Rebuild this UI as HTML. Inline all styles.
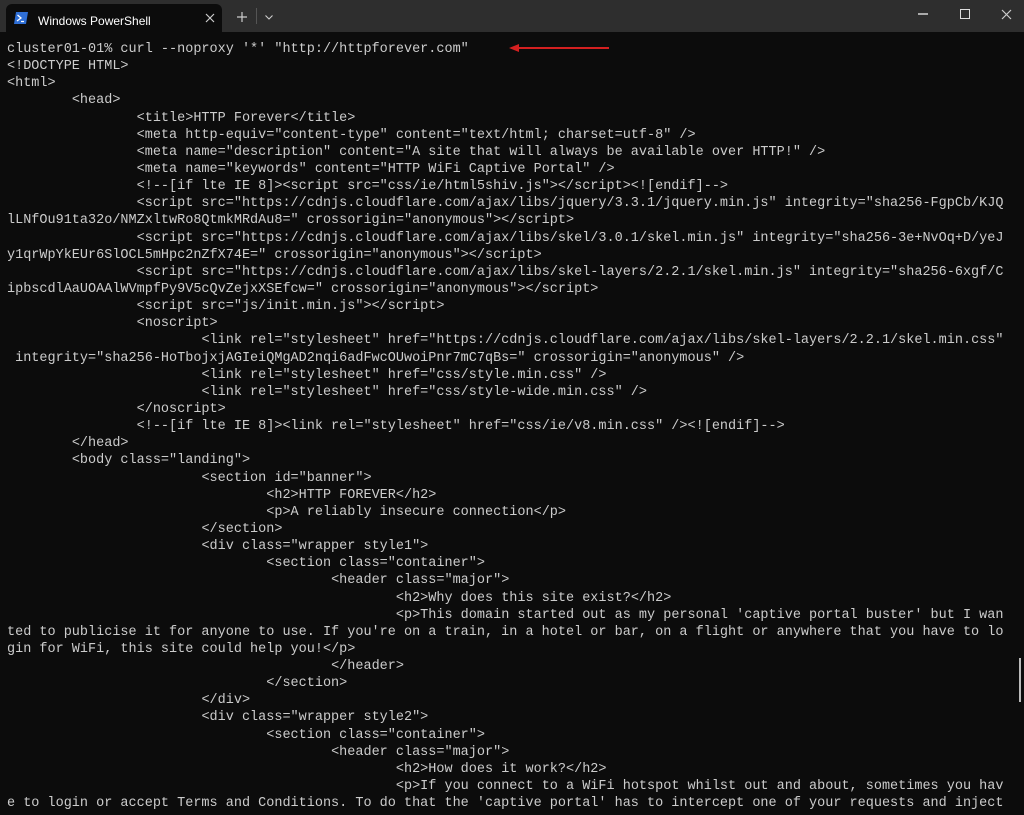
<!DOCTYPE html>
<html><head><style>
body{margin:0;width:1024px;height:815px;background:#0c0c0c;overflow:hidden;position:relative;font-family:"Liberation Sans",sans-serif}
.tb{position:absolute;left:0;top:0;width:1024px;height:32px;background:#2e2e2e}
.tab{position:absolute;left:6px;top:4px;width:216px;height:28px;background:#0c0c0c;border-radius:6px 6px 0 0}
.tt{position:absolute;left:32px;top:10px;color:#fff;font-size:12px}
pre{position:absolute;left:7px;top:41px;margin:0;font-family:"Liberation Mono",monospace;font-size:13.5px;line-height:17.14px;color:#cccccc;tab-size:8;-moz-tab-size:8;white-space:pre}
</style></head><body>
<div class="tb">
<div class="tab">
<svg style="position:absolute;left:8px;top:8px" width="14" height="12"><path d="M2 0H14L12 12H0Z" fill="#2f6fd6"/><path d="M3.5 3L7 6 3 9" stroke="#fff" stroke-width="1.3" fill="none"/><path d="M7 9.5H10" stroke="#fff" stroke-width="1.2"/></svg>
<div class="tt">Windows PowerShell</div>
<svg style="position:absolute;left:199px;top:9px" width="10" height="10"><path d="M1 1L9 9M9 1L1 9" stroke="#ccc" stroke-width="1.2"/></svg>
</div>
<svg style="position:absolute;left:237px;top:12px" width="10" height="10"><path d="M5 0V10M0 5H10" stroke="#ccc" stroke-width="1.2"/></svg>
<div style="position:absolute;left:256px;top:8px;width:1px;height:16px;background:#555"></div>
<svg style="position:absolute;left:265px;top:15px" width="8" height="5"><path d="M0.5 0.5L4 4 7.5 0.5" stroke="#ccc" stroke-width="1.1" fill="none"/></svg>
<div style="position:absolute;left:918px;top:13px;width:10px;height:1.5px;background:#aaa"></div>
<div style="position:absolute;left:960px;top:9px;width:8px;height:8px;border:1.3px solid #ddd"></div>
<svg style="position:absolute;left:1001px;top:9px" width="11" height="11"><path d="M1 1L10 10M10 1L1 10" stroke="#ccc" stroke-width="1.2"/></svg>
</div>
<svg style="position:absolute;left:505px;top:43px" width="106" height="10"><path d="M12 5H104" stroke="#d42020" stroke-width="2"/><path d="M4 5L14 1V9Z" fill="#d42020"/></svg>
<div style="position:absolute;left:1019px;top:658px;width:2px;height:44px;background:#bbb"></div>
<pre>cluster01-01% curl --noproxy '*' "http://httpforever.com"
&lt;!DOCTYPE HTML&gt;
&lt;html&gt;
	&lt;head&gt;
		&lt;title&gt;HTTP Forever&lt;/title&gt;
		&lt;meta http-equiv="content-type" content="text/html; charset=utf-8" /&gt;
		&lt;meta name="description" content="A site that will always be available over HTTP!" /&gt;
		&lt;meta name="keywords" content="HTTP WiFi Captive Portal" /&gt;
		&lt;!--[if lte IE 8]&gt;&lt;script src="css/ie/html5shiv.js"&gt;&lt;/script&gt;&lt;![endif]--&gt;
		&lt;script src="https://cdnjs.cloudflare.com/ajax/libs/jquery/3.3.1/jquery.min.js" integrity="sha256-FgpCb/KJQ
lLNfOu91ta32o/NMZxltwRo8QtmkMRdAu8=" crossorigin="anonymous"&gt;&lt;/script&gt;
		&lt;script src="https://cdnjs.cloudflare.com/ajax/libs/skel/3.0.1/skel.min.js" integrity="sha256-3e+NvOq+D/yeJ
y1qrWpYkEUr6SlOCL5mHpc2nZfX74E=" crossorigin="anonymous"&gt;&lt;/script&gt;
		&lt;script src="https://cdnjs.cloudflare.com/ajax/libs/skel-layers/2.2.1/skel.min.js" integrity="sha256-6xgf/C
ipbscdlAaUOAAlWVmpfPy9V5cQvZejxXSEfcw=" crossorigin="anonymous"&gt;&lt;/script&gt;
		&lt;script src="js/init.min.js"&gt;&lt;/script&gt;
		&lt;noscript&gt;
			&lt;link rel="stylesheet" href="https://cdnjs.cloudflare.com/ajax/libs/skel-layers/2.2.1/skel.min.css"
 integrity="sha256-HoTbojxjAGIeiQMgAD2nqi6adFwcOUwoiPnr7mC7qBs=" crossorigin="anonymous" /&gt;
			&lt;link rel="stylesheet" href="css/style.min.css" /&gt;
			&lt;link rel="stylesheet" href="css/style-wide.min.css" /&gt;
		&lt;/noscript&gt;
		&lt;!--[if lte IE 8]&gt;&lt;link rel="stylesheet" href="css/ie/v8.min.css" /&gt;&lt;![endif]--&gt;
	&lt;/head&gt;
	&lt;body class="landing"&gt;
			&lt;section id="banner"&gt;
				&lt;h2&gt;HTTP FOREVER&lt;/h2&gt;
				&lt;p&gt;A reliably insecure connection&lt;/p&gt;
			&lt;/section&gt;
			&lt;div class="wrapper style1"&gt;
				&lt;section class="container"&gt;
					&lt;header class="major"&gt;
						&lt;h2&gt;Why does this site exist?&lt;/h2&gt;
						&lt;p&gt;This domain started out as my personal 'captive portal buster' but I wan
ted to publicise it for anyone to use. If you're on a train, in a hotel or bar, on a flight or anywhere that you have to lo
gin for WiFi, this site could help you!&lt;/p&gt;
					&lt;/header&gt;
				&lt;/section&gt;
			&lt;/div&gt;
			&lt;div class="wrapper style2"&gt;
				&lt;section class="container"&gt;
					&lt;header class="major"&gt;
						&lt;h2&gt;How does it work?&lt;/h2&gt;
						&lt;p&gt;If you connect to a WiFi hotspot whilst out and about, sometimes you hav
e to login or accept Terms and Conditions. To do that the 'captive portal' has to intercept one of your requests and inject</pre>
</body></html>
